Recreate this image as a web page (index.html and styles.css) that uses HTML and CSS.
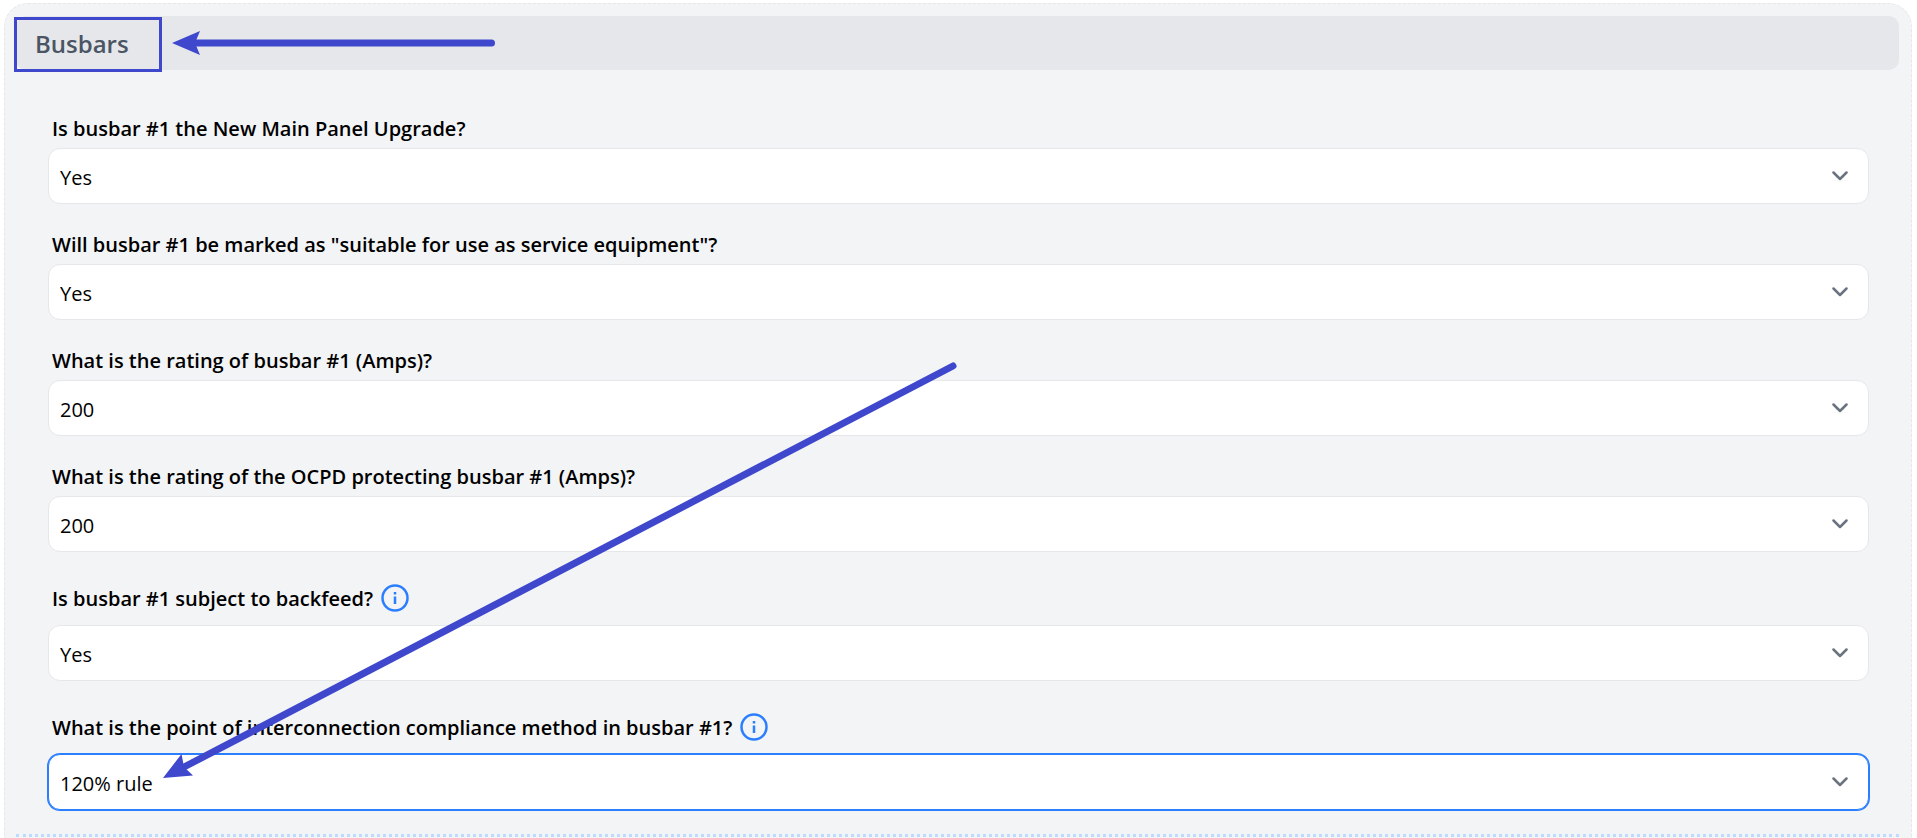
FILE: index.html
```html
<!DOCTYPE html>
<html lang="en">
<head>
    <meta charset="UTF-8">
    <meta name="viewport" content="width=device-width, initial-scale=1.0">
    <title>Busbars</title>
    <link rel="stylesheet" href="styles.css">
</head>
<body>
    <main class="panel">
        <h2 class="panel-title">Busbars</h2>

        <form class="fields">
            <div class="field">
                <div class="field-label">
                    <label for="panelUpgrade">Is busbar #1 the New Main Panel Upgrade?</label>
                </div>
                <div class="select-wrap">
                    <select id="panelUpgrade"><option>Yes</option><option>No</option></select>
                    <svg class="chevron" viewBox="0 0 16 10"><path d="M1.5 1.5 L8 8 L14.5 1.5"/></svg>
                </div>
            </div>

            <div class="field">
                <div class="field-label">
                    <label for="serviceEquipment">Will busbar #1 be marked as "suitable for use as service equipment"?</label>
                </div>
                <div class="select-wrap">
                    <select id="serviceEquipment"><option>Yes</option><option>No</option></select>
                    <svg class="chevron" viewBox="0 0 16 10"><path d="M1.5 1.5 L8 8 L14.5 1.5"/></svg>
                </div>
            </div>

            <div class="field">
                <div class="field-label">
                    <label for="busbarRating">What is the rating of busbar #1 (Amps)?</label>
                </div>
                <div class="select-wrap">
                    <select id="busbarRating"><option>200</option></select>
                    <svg class="chevron" viewBox="0 0 16 10"><path d="M1.5 1.5 L8 8 L14.5 1.5"/></svg>
                </div>
            </div>

            <div class="field">
                <div class="field-label">
                    <label for="ocpdRating">What is the rating of the OCPD protecting busbar #1 (Amps)?</label>
                </div>
                <div class="select-wrap">
                    <select id="ocpdRating"><option>200</option></select>
                    <svg class="chevron" viewBox="0 0 16 10"><path d="M1.5 1.5 L8 8 L14.5 1.5"/></svg>
                </div>
            </div>

            <div class="field">
                <div class="field-label with-info">
                    <label for="backfeed">Is busbar #1 subject to backfeed?</label>
                    <button type="button" class="info" aria-label="More information">
                        <svg viewBox="0 0 28 28"><circle cx="14" cy="14" r="12.5"/><path d="M14 12.5 V20 M14 8 V10.5"/></svg>
                    </button>
                </div>
                <div class="select-wrap">
                    <select id="backfeed"><option>Yes</option><option>No</option></select>
                    <svg class="chevron" viewBox="0 0 16 10"><path d="M1.5 1.5 L8 8 L14.5 1.5"/></svg>
                </div>
            </div>

            <div class="field">
                <div class="field-label with-info">
                    <label for="compliance">What is the point of interconnection compliance method in busbar #1?</label>
                    <button type="button" class="info" aria-label="More information">
                        <svg viewBox="0 0 28 28"><circle cx="14" cy="14" r="12.5"/><path d="M14 12.5 V20 M14 8 V10.5"/></svg>
                    </button>
                </div>
                <div class="select-wrap">
                    <select id="compliance" class="active"><option>120% rule</option></select>
                    <svg class="chevron" viewBox="0 0 16 10"><path d="M1.5 1.5 L8 8 L14.5 1.5"/></svg>
                </div>
            </div>
        </form>

        <hr class="divider">
    </main>

    <!-- Callout box and arrows over the form -->
    <svg class="callouts" width="1000" height="800" viewBox="0 0 1000 800">
        <rect x="15.5" y="18.5" width="145" height="52"/>
        <path class="shaft" d="M195 43 H491.5"/>
        <path class="head" d="M172 43 L200 31 L195 43 L200 55 Z"/>
        <path class="shaft" d="M184 767 L953 366"/>
        <path class="head" d="M163 778 L181.5 754 L184 767 L193 775.5 Z"/>
    </svg>
</body>
</html>
```
FILE: styles.css
```css
* {
    box-sizing: border-box;
}
body {
    position: relative;
    display: flex;
    flex-direction: column;
    min-height: 100vh;
    margin: 0;
    padding: 3px 5px 0 4px;
    background-color: #fff;
    color: #000;
    font-family: "Segoe UI", "Open Sans", "Noto Sans", sans-serif;
    font-size: 20px;
}
.panel {
    flex: 1;
    padding: 12px 12px 0 11px;
    border: 1px dashed #e5e7eb;
    border-bottom: none;
    border-radius: 24px 24px 0 0;
    background-color: #f3f4f6;
}
.panel-title {
    margin: 0;
    padding: 1px 19px 0;
    border-radius: 10px;
    background-color: #e5e7eb;
    color: #4b5563;
    font-size: 24px;
    font-weight: 600;
    line-height: 53px;
}
.fields {
    display: flex;
    flex-direction: column;
    gap: 24px;
    padding: 42px 30px 24px 32px;
}
.field-label {
    display: flex;
    align-items: center;
    gap: 8px;
    height: 36px;
    padding: 0 4px 3px;
    font-weight: 600;
}
.with-info {
    height: 49px;
    padding-bottom: 4px;
}
.info {
    width: 28px;
    height: 28px;
    margin-bottom: 2px;
    padding: 0;
    border: none;
    background: none;
    cursor: pointer;
}
.info svg {
    display: block;
    fill: none;
    stroke: #2b7fff;
    stroke-width: 2.5;
}
.select-wrap {
    position: relative;
}
select {
    display: block;
    width: 100%;
    height: 56px;
    padding: 2px 11px 0;
    border: 1px solid #e5e7eb;
    border-radius: 12px;
    background-color: #fff;
    color: #000;
    font-family: inherit;
    font-size: 20px;
    appearance: none;
}
select.active {
    border-color: #2b7fff;
    box-shadow: 0 0 0 1px #2b7fff;
}
.chevron {
    position: absolute;
    top: 23px;
    right: 21px;
    width: 16px;
    height: 10px;
    fill: none;
    stroke: #6b7280;
    stroke-width: 2.5;
    stroke-linecap: round;
    stroke-linejoin: round;
    pointer-events: none;
}
.divider {
    margin: 0;
    border: none;
    border-top: 3px dotted #bedbff;
}
.callouts {
    position: absolute;
    top: 0;
    left: 0;
    fill: none;
    stroke: #3f48cc;
    stroke-width: 3;
    pointer-events: none;
}
.callouts .shaft {
    stroke-width: 7;
    stroke-linecap: round;
}
.callouts .head {
    fill: #3f48cc;
    stroke: none;
}
```
